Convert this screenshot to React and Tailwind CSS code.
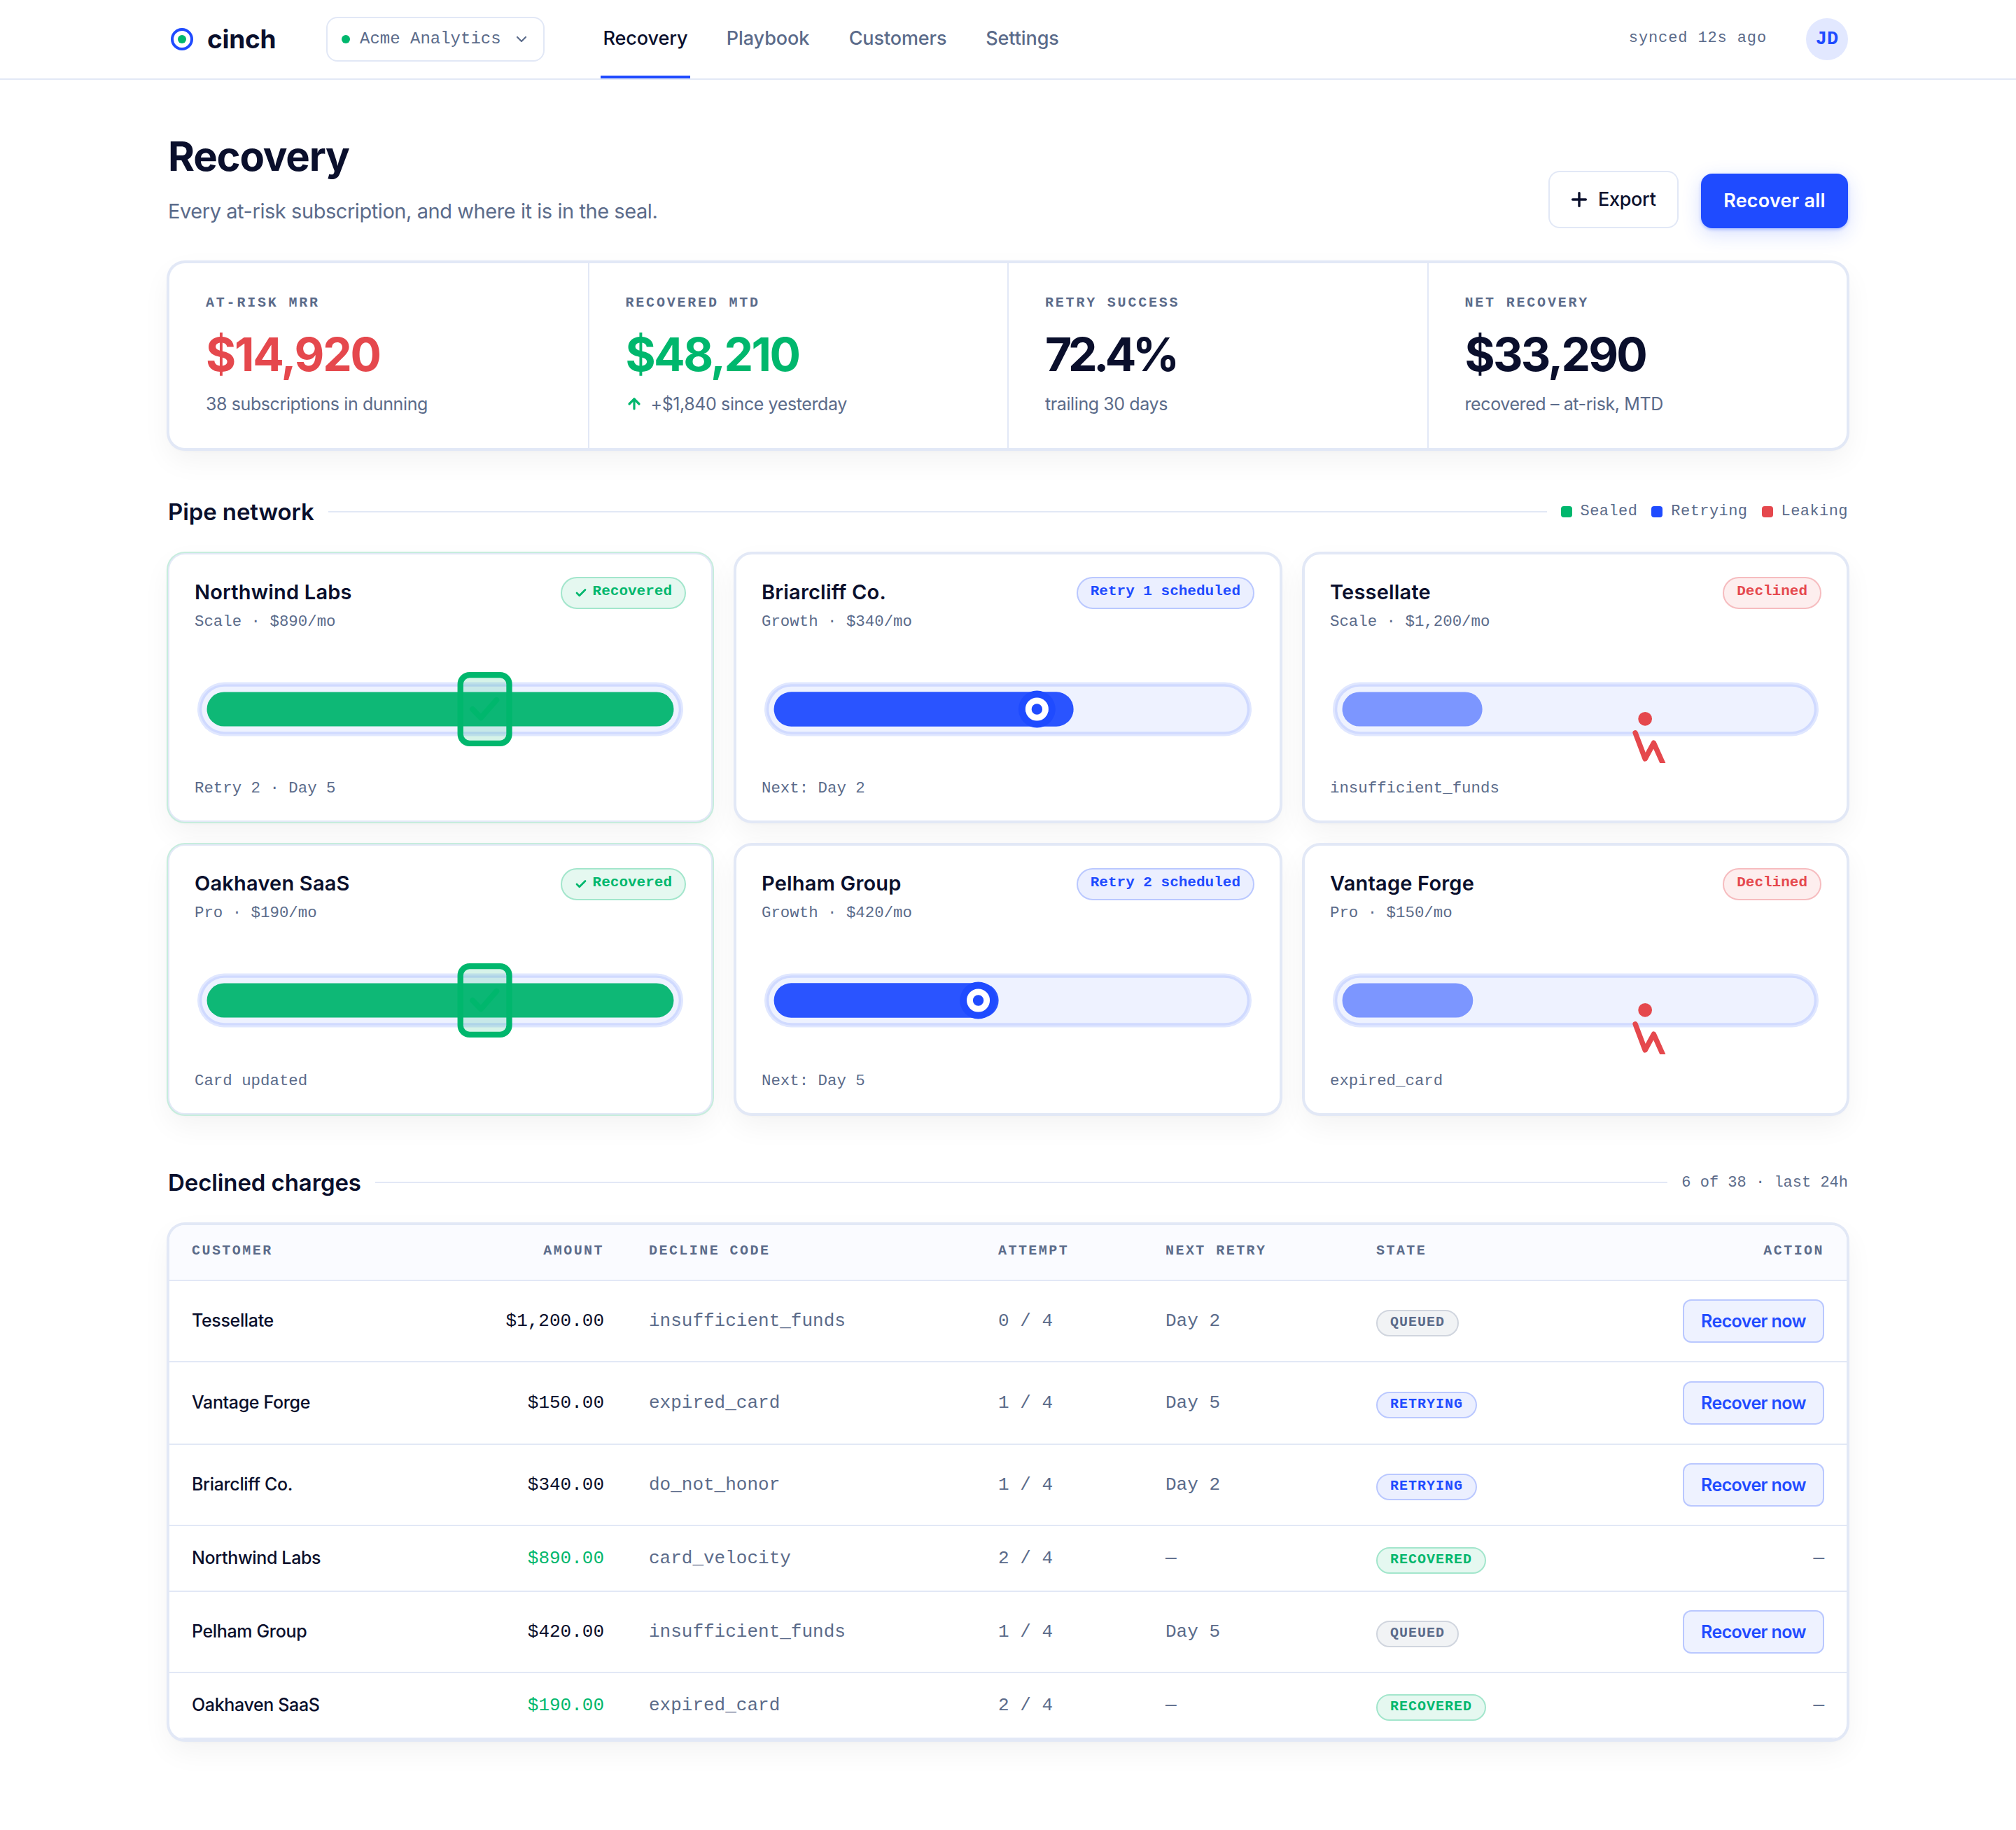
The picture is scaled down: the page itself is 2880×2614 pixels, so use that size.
import { ArrowUp, Check, ChevronDown, Plus } from 'lucide-react'
import clsx from 'clsx'

const nav = [
  { label: 'Recovery', width: 'w-32', active: true },
  { label: 'Playbook', width: 'w-[126px]' },
  { label: 'Customers', width: 'w-[149px]' },
  { label: 'Settings', width: 'w-[111px]' },
]

const stats = [
  { label: 'AT-RISK MRR', value: '$14,920', note: '38 subscriptions in dunning', tone: 'text-[#e5484d] tracking-[-2.2px]' },
  { label: 'RECOVERED MTD', value: '$48,210', note: '+$1,840 since yesterday', tone: 'text-[#00b76d] tracking-[-2.6px]', up: true },
  { label: 'RETRY SUCCESS', value: '72.4%', note: 'trailing 30 days', tone: 'text-[#0a0f2c] tracking-[-5.4px]' },
  { label: 'NET RECOVERY', value: '$33,290', note: 'recovered – at-risk, MTD', tone: 'text-[#0a0f2c] tracking-[-2.8px]' },
]

const legend = [
  { label: 'Sealed', color: 'bg-[#00b76d]' },
  { label: 'Retrying', color: 'bg-[#1f4bff]' },
  { label: 'Leaking', color: 'bg-[#e5484d]' },
]

const pipes = [
  { name: 'Northwind Labs', plan: 'Scale · $890/mo', state: 'sealed', badge: 'Recovered', note: 'Retry 2 · Day 5', fill: 1 },
  { name: 'Briarcliff Co.', plan: 'Growth · $340/mo', state: 'retrying', badge: 'Retry 1 scheduled', note: 'Next: Day 2', fill: 0.64, knob: 178.8 },
  { name: 'Tessellate', plan: 'Scale · $1,200/mo', state: 'leaking', badge: 'Declined', note: 'insufficient_funds', fill: 0.3 },
  { name: 'Oakhaven SaaS', plan: 'Pro · $190/mo', state: 'sealed', badge: 'Recovered', note: 'Card updated', fill: 1 },
  { name: 'Pelham Group', plan: 'Growth · $420/mo', state: 'retrying', badge: 'Retry 2 scheduled', note: 'Next: Day 5', fill: 0.48, knob: 140.7 },
  { name: 'Vantage Forge', plan: 'Pro · $150/mo', state: 'leaking', badge: 'Declined', note: 'expired_card', fill: 0.28 },
]

const charges = [
  { customer: 'Tessellate', amount: '$1,200.00', code: 'insufficient_funds', attempt: '0 / 4', next: 'Day 2', state: 'queued', height: 'h-[116px]' },
  { customer: 'Vantage Forge', amount: '$150.00', code: 'expired_card', attempt: '1 / 4', next: 'Day 5', state: 'retrying', height: 'h-[118px]' },
  { customer: 'Briarcliff Co.', amount: '$340.00', code: 'do_not_honor', attempt: '1 / 4', next: 'Day 2', state: 'retrying', height: 'h-[116px]' },
  { customer: 'Northwind Labs', amount: '$890.00', code: 'card_velocity', attempt: '2 / 4', next: '—', state: 'recovered', height: 'h-[94px]' },
  { customer: 'Pelham Group', amount: '$420.00', code: 'insufficient_funds', attempt: '1 / 4', next: 'Day 5', state: 'queued', height: 'h-[116px]' },
  { customer: 'Oakhaven SaaS', amount: '$190.00', code: 'expired_card', attempt: '2 / 4', next: '—', state: 'recovered', height: 'h-[94px]' },
]

const tones = {
  green: 'border-[#a3e6cc] bg-[#e5f8f0] text-[#00b76d]',
  blue: 'border-[#bac8ff] bg-[#ebefff] text-[#1f4bff]',
  red: 'border-[#f6bcbf] bg-[#fdeeee] text-[#e5484d]',
  gray: 'border-[#d0d5de] bg-[#f1f3f5] text-[#5b6b8a]',
}

const pipeTone = { sealed: 'green', retrying: 'blue', leaking: 'red' }
const chargeTone = { queued: 'gray', retrying: 'blue', recovered: 'green' }

const mono = "font-['Liberation_Mono',monospace]"
const cardShadow = 'shadow-[0_0_0_2px_#e2e8f6,0_2px_4px_rgba(10,10,10,0.03),0_16px_40px_rgba(10,10,10,0.05)]'
const sealedShadow = 'shadow-[0_0_0_2px_#c6eddd,0_2px_4px_rgba(10,10,10,0.03),0_16px_40px_rgba(10,10,10,0.05)]'

function Header() {
  return (
    <header className="h-[114px] border-b-2 border-[#e2e8f6]">
      <div className="mx-auto flex h-full w-[2400px] items-center">
        <svg className="size-10" viewBox="0 0 40 40" fill="none">
          <circle cx="20" cy="20" r="14" stroke="#1f4bff" strokeWidth="4" />
          <circle cx="20" cy="20" r="6" fill="#00b76d" />
        </svg>
        <span className="ml-4 w-[170px] text-[37px] font-bold tracking-[-0.3px]">cinch</span>

        <button className="flex h-16 w-[312px] items-center rounded-2xl border-2 border-[#e2e8f6] pl-5 text-[#5b6b8a]">
          <span className="size-3 rounded-full bg-[#00b76d]" />
          <span className={clsx(mono, 'ml-3.5 text-2xl')}>Acme Analytics</span>
          <ChevronDown className="ml-[17px] size-6" strokeWidth={2.2} />
        </button>

        <nav className="ml-20 flex h-full gap-12">
          {nav.map((item) => (
            <a
              key={item.label}
              className={clsx(
                'flex items-center justify-center border-b-4 pt-0.5 text-[27px] font-medium tracking-[-0.1px] whitespace-nowrap',
                item.width,
                item.active ? 'border-[#1f4bff] text-[#0a0f2c]' : 'border-transparent text-[#5b6b8a]',
              )}
            >
              {item.label}
            </a>
          ))}
        </nav>

        <span className={clsx(mono, 'ml-auto pb-[3px] text-[22px] tracking-[0.88px] text-[#5b6b8a]')}>synced 12s ago</span>
        <span className={clsx(mono, 'ml-14 grid size-[60px] place-items-center rounded-full bg-[#e2e8ff] text-[27px] font-bold text-[#1f4bff]')}>
          JD
        </span>
      </div>
    </header>
  )
}

function PageTitle() {
  return (
    <div className="flex h-[133px] items-end justify-between">
      <div className="h-full">
        <h1 className="text-[58px] leading-[60px] font-bold tracking-[-1.2px]">Recovery</h1>
        <p className="mt-[29px] text-[29px] leading-10 tracking-[-0.44px] text-[#5b6b8a]">Every at-risk subscription, and where it is in the seal.</p>
      </div>
      <div className="flex items-end gap-8">
        <button className="flex h-[82px] w-[186px] items-center rounded-2xl border-2 border-[#e2e8f6] pl-[26px] text-[27px] font-medium tracking-[-0.3px]">
          <Plus className="size-8" strokeWidth={2.6} />
          <span className="ml-[11px]">Export</span>
        </button>
        <button className="h-[78px] w-[210px] rounded-2xl bg-[#1f4bff] text-[27px] font-semibold tracking-[0.2px] text-white shadow-[0_2px_4px_rgba(31,75,255,0.3),0_8px_28px_rgba(31,75,255,0.18)]">
          Recover all
        </button>
      </div>
    </div>
  )
}

function Stats() {
  return (
    <section className={clsx('mt-12 grid h-[268px] grid-cols-4 gap-0.5 overflow-hidden rounded-3xl border-2 border-[#e2e8f6] bg-[#e2e8f6]', cardShadow)}>
      {stats.map((stat) => (
        <div key={stat.label} className="bg-white pt-[45px] pl-[52px]">
          <div className={clsx(mono, 'text-[20px] leading-6 font-bold tracking-[2.8px] text-[#5b6b8a]')}>{stat.label}</div>
          <div className={clsx('mt-[27px] text-[66px] leading-[68px] font-bold', stat.tone)}>{stat.value}</div>
          <div className="mt-[19px] flex items-center text-[25px] leading-9 tracking-[-0.4px] text-[#5b6b8a]">
            {stat.up && <ArrowUp className="mr-3 size-6 text-[#00b76d]" strokeWidth={3.2} />}
            {stat.note}
          </div>
        </div>
      ))}
    </section>
  )
}

function SectionHead({ title, children }) {
  return (
    <div className="flex h-10 items-center gap-5">
      <h2 className="text-[33px] leading-10 font-semibold tracking-[-0.1px]">{title}</h2>
      <span className="h-0.5 flex-1 bg-[#e2e8f6]" />
      {children}
    </div>
  )
}

function Pipe({ state, fill, knob }) {
  const color = { sealed: '#0eb876', retrying: '#2a54ff', leaking: '#7c96ff' }[state]
  return (
    <svg className="mt-[33px] block h-[154px] w-full" viewBox="0 0 320 70" fill="none">
      <rect x="1.8" y="17.5" width="316.4" height="35" rx="17.5" fill="#e0e7ff" />
      <rect x="3.1" y="18.8" width="313.8" height="32.4" rx="16.2" fill="#d0daff" />
      <rect x="4.7" y="20.3" width="310.6" height="29.4" rx="14.7" fill="#eef2ff" />
      <rect x="8" y="23.8" width={304 * fill} height="22.4" rx="11.2" fill={color} />

      {state === 'sealed' && (
        <>
          <rect x="173.1" y="12.7" width="31.8" height="44.6" rx="6" fill="#00b76d" fillOpacity="0.16" stroke="#00b76d" strokeWidth="3.8" />
          <path d="M181 35l5.400 5.600L196.600 29" stroke="#00b76d" strokeWidth="3.6" strokeLinecap="round" strokeLinejoin="round" />
        </>
      )}
      {state === 'retrying' && (
        <>
          <circle cx={knob} cy="35" r="12" fill="#1f4bff" />
          <circle cx={knob} cy="35" r="5.5" fill="#1f4bff" stroke="#fff" strokeWidth="4" />
        </>
      )}
      {state === 'leaking' && (
        <>
          <circle cx="205.2" cy="41.3" r="4.5" fill="#e5484d" />
          <path d="M198.800 50.400L205.200 67.300L210.800 57L218.200 73.500" stroke="#e5484d" strokeWidth="3.4" strokeLinecap="round" strokeLinejoin="round" />
        </>
      )}
    </svg>
  )
}

function PipeCard({ pipe }) {
  return (
    <article
      className={clsx(
        'flex flex-col rounded-3xl border-2 border-[#e2e8f6] bg-white px-9 pt-8 pb-[31px]',
        pipe.state === 'sealed' ? sealedShadow : cardShadow,
      )}
    >
      <div className="flex h-[79px] items-start justify-between">
        <div>
          <h3 className="mt-0.5 text-[29px] leading-10 font-semibold tracking-[0.2px]">{pipe.name}</h3>
          <p className={clsx(mono, 'mt-[7px] text-[22.4px] leading-[30px] text-[#5b6b8a]')}>{pipe.plan}</p>
        </div>
        <span className={clsx(mono, 'flex h-[46px] items-center rounded-full border-2 px-[18px] text-[21px] font-bold', tones[pipeTone[pipe.state]])}>
          {pipe.state === 'sealed' && <Check className="mr-2 size-[18px]" strokeWidth={3.6} />}
          <span className="pb-[5px]">{pipe.badge}</span>
        </span>
      </div>
      <Pipe state={pipe.state} fill={pipe.fill} knob={pipe.knob} />
      <p className={clsx(mono, 'mt-auto text-[22.4px] leading-[30px] text-[#5b6b8a]')}>{pipe.note}</p>
    </article>
  )
}

function ChargesTable() {
  return (
    <div className={clsx('mt-[39px] overflow-hidden rounded-3xl border-2 border-[#e2e8f6] bg-white', cardShadow)}>
      <table className="w-full table-fixed border-separate border-spacing-0 text-left">
        <thead className={clsx(mono, 'bg-[#fafbff] text-[20px] tracking-[2.45px] text-[#5b6b8a] [&_th]:border-b-2 [&_th]:border-[#e2e8f6] [&_th]:px-8 [&_th]:pt-0 [&_th]:pb-1')}>
          <tr className="h-20">
            <th className="w-[300px]">CUSTOMER</th>
            <th className="w-[353px] text-right">AMOUNT</th>
            <th className="w-[499px]">DECLINE CODE</th>
            <th className="w-[239px]">ATTEMPT</th>
            <th className="w-[301px]">NEXT RETRY</th>
            <th className="w-[300px]">STATE</th>
            <th className="text-right">ACTION</th>
          </tr>
        </thead>
        <tbody className={clsx(mono, 'text-[26px] text-[#5b6b8a] [&_td]:border-b-2 [&_td]:border-[#e2e8f6] [&_td]:px-8 [&_td]:py-0')}>
          {charges.map((row) => (
            <tr key={row.customer} className={row.height}>
              <td className="font-['Inter',sans-serif] text-[25px] font-medium tracking-[-0.35px] whitespace-nowrap text-[#0a0f2c]">{row.customer}</td>
              <td className={clsx('text-right', row.state === 'recovered' ? 'text-[#00b76d]' : 'text-[#0a0f2c]')}>{row.amount}</td>
              <td>{row.code}</td>
              <td>{row.attempt}</td>
              <td>{row.next}</td>
              <td>
                <span
                  className={clsx(
                    'mt-1.5 flex h-[38px] w-fit items-center rounded-full border-2 px-[18px] pb-[3px] text-[20px] font-bold tracking-[1px] uppercase',
                    tones[chargeTone[row.state]],
                  )}
                >
                  {row.state}
                </span>
              </td>
              <td className="text-right">
                {row.state === 'recovered' ? (
                  '—'
                ) : (
                  <button className="ml-auto block h-[62px] w-[202px] rounded-xl border-2 border-[#bac8ff] bg-[#eef2ff] pt-px font-['Inter',sans-serif] text-[25px] font-semibold tracking-[-0.6px] text-[#1f4bff]">
                    Recover now
                  </button>
                )}
              </td>
            </tr>
          ))}
        </tbody>
      </table>
    </div>
  )
}

export default function App() {
  return (
    <div className="min-h-[2614px] bg-white font-['Inter',sans-serif] text-[#0a0f2c]">
      <Header />
      <main className="mx-auto w-[2400px] pt-[79px]">
        <PageTitle />
        <Stats />

        <section className="mt-[69px]">
          <SectionHead title="Pipe network">
            <div className={clsx(mono, 'flex gap-5 text-[22px] leading-8 tracking-[0.44px] text-[#5b6b8a]')}>
              {legend.map((item) => (
                <span key={item.label} className="flex items-center gap-3">
                  <span className={clsx('size-4 rounded', item.color)} />
                  {item.label}
                </span>
              ))}
            </div>
          </SectionHead>
          <div className="mt-[39px] grid grid-cols-[778px_780px_778px] grid-rows-[384px_386px] gap-8">
            {pipes.map((pipe) => (
              <PipeCard key={pipe.name} pipe={pipe} />
            ))}
          </div>
        </section>

        <section className="mt-[77px]">
          <SectionHead title="Declined charges">
            <span className={clsx(mono, 'text-[22px] text-[#5b6b8a]')}>6 of 38 · last 24h</span>
          </SectionHead>
          <ChargesTable />
        </section>
      </main>
    </div>
  )
}
